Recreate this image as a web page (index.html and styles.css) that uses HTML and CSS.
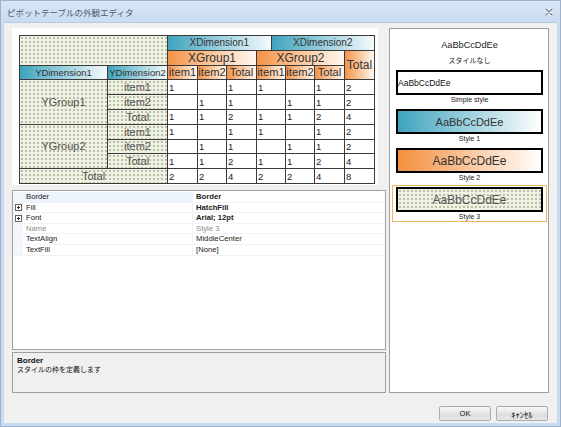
FILE: index.html
```html
<!DOCTYPE html>
<html lang="ja">
<head>
  <meta charset="UTF-8">
  <title>ピボットテーブルの外観エディタ</title>
  <link rel="stylesheet" href="styles.css">
</head>
<body>
<div class="window">
  <!-- Title bar -->
  <div class="titlebar">
    <span class="title">ピボットテーブルの外観エディタ</span>
    <svg class="close" width="8" height="8" viewBox="0 0 8 8">
      <path d="M1 1 L7 7 M7 1 L1 7" stroke="#fff" stroke-width="3" stroke-linecap="round"/>
      <path d="M1 1 L7 7 M7 1 L1 7" stroke="#6d7f96" stroke-width="1.4" stroke-linecap="round"/>
    </svg>
  </div>

  <div class="client">
    <div class="main">
      <div class="left">
        <!-- Pivot preview -->
        <div class="preview">
          <div class="pivot">
            <div class="cell hatch corner"></div>
            <div class="cell xdims">
              <div class="teal">XDimension1</div>
              <div class="teal">XDimension2</div>
            </div>

            <div class="cell orange group span3">XGroup1</div>
            <div class="cell orange group span3">XGroup2</div>
            <div class="cell orange group rows2">Total</div>

            <div class="cell teal ydim">YDimension1</div>
            <div class="cell teal ydim">YDimension2</div>
            <div class="cell orange item">item1</div>
            <div class="cell orange item">item2</div>
            <div class="cell orange item">Total</div>
            <div class="cell orange item">item1</div>
            <div class="cell orange item">item2</div>
            <div class="cell orange item">Total</div>

            <div class="cell hatch rowgroup rows3">YGroup1</div>
            <div class="cell hatch rowhead">item1</div>
            <div class="cell num">1</div><div class="cell num"></div><div class="cell num">1</div><div class="cell num">1</div><div class="cell num"></div><div class="cell num">1</div><div class="cell num">2</div>
            <div class="cell hatch rowhead">item2</div>
            <div class="cell num"></div><div class="cell num">1</div><div class="cell num">1</div><div class="cell num"></div><div class="cell num">1</div><div class="cell num">1</div><div class="cell num">2</div>
            <div class="cell hatch rowhead">Total</div>
            <div class="cell num">1</div><div class="cell num">1</div><div class="cell num">2</div><div class="cell num">1</div><div class="cell num">1</div><div class="cell num">2</div><div class="cell num">4</div>

            <div class="cell hatch rowgroup rows3">YGroup2</div>
            <div class="cell hatch rowhead">item1</div>
            <div class="cell num">1</div><div class="cell num"></div><div class="cell num">1</div><div class="cell num">1</div><div class="cell num"></div><div class="cell num">1</div><div class="cell num">2</div>
            <div class="cell hatch rowhead">item2</div>
            <div class="cell num"></div><div class="cell num">1</div><div class="cell num">1</div><div class="cell num"></div><div class="cell num">1</div><div class="cell num">1</div><div class="cell num">2</div>
            <div class="cell hatch rowhead">Total</div>
            <div class="cell num">1</div><div class="cell num">1</div><div class="cell num">2</div><div class="cell num">1</div><div class="cell num">1</div><div class="cell num">2</div><div class="cell num">4</div>

            <div class="cell hatch rowhead span2">Total</div>
            <div class="cell num">2</div><div class="cell num">2</div><div class="cell num">4</div><div class="cell num">2</div><div class="cell num">2</div><div class="cell num">4</div><div class="cell num">8</div>
          </div>
        </div>

        <!-- Property grid -->
        <div class="props">
          <div class="prop-row selected">
            <span class="gutter"></span><span class="pname">Border</span><span class="pval bold">Border</span>
          </div>
          <div class="prop-row">
            <span class="gutter"><svg width="7" height="7" viewBox="0 0 7 7"><rect x="0.5" y="0.5" width="6" height="6" fill="#fff" stroke="#666"/><path d="M2 3.5 H5 M3.5 2 V5" stroke="#333"/></svg></span>
            <span class="pname">Fill</span><span class="pval bold">HatchFill</span>
          </div>
          <div class="prop-row">
            <span class="gutter"><svg width="7" height="7" viewBox="0 0 7 7"><rect x="0.5" y="0.5" width="6" height="6" fill="#fff" stroke="#666"/><path d="M2 3.5 H5 M3.5 2 V5" stroke="#333"/></svg></span>
            <span class="pname">Font</span><span class="pval bold">Arial; 12pt</span>
          </div>
          <div class="prop-row readonly">
            <span class="gutter"></span><span class="pname">Name</span><span class="pval">Style 3</span>
          </div>
          <div class="prop-row">
            <span class="gutter"></span><span class="pname">TextAlign</span><span class="pval">MiddleCenter</span>
          </div>
          <div class="prop-row">
            <span class="gutter"></span><span class="pname">TextFill</span><span class="pval">[None]</span>
          </div>
        </div>

        <!-- Description -->
        <div class="desc">
          <div class="desc-title">Border</div>
          <div class="desc-text">スタイルの枠を定義します</div>
        </div>
      </div>

      <!-- Style list -->
      <div class="styles">
        <div class="nostyle-sample">AaBbCcDdEe</div>
        <div class="nostyle-label">スタイルなし</div>

        <div class="style-item">
          <div class="sample simple">AaBbCcDdEe</div>
          <div class="style-name">Simple style</div>
        </div>
        <div class="style-item">
          <div class="sample style1">AaBbCcDdEe</div>
          <div class="style-name">Style 1</div>
        </div>
        <div class="style-item">
          <div class="sample style2">AaBbCcDdEe</div>
          <div class="style-name">Style 2</div>
        </div>
        <div class="style-item selected">
          <div class="sample style3 hatch">AaBbCcDdEe</div>
          <div class="style-name">Style 3</div>
        </div>
      </div>
    </div>

    <div class="buttons">
      <button class="btn">OK</button>
      <button class="btn cancel">ｷｬﾝｾﾙ</button>
    </div>
  </div>
</div>
</body>
</html>
```

FILE: styles.css
```css
/* styles.css */

:root {
  --frame: #c9dbef;
  --face: #f0f0f0;
  --panel-border: #a0a0a0;
  --grid-line: #3a3a3a;
  --teal: #3fa3be;
  --orange: #f49447;
}

* {
  box-sizing: border-box;
}

body {
  margin: 0;
  font-family: "Liberation Sans", "Noto Sans CJK JP", sans-serif;
  background: #ffffff;
}

/* Window frame */
.window {
  width: 561px;
  height: 427px;
  display: flex;
  flex-direction: column;
  background: linear-gradient(#d9e6f5, var(--frame) 22px);
  border: 1px solid #9db2cc;
  padding: 0 3px 3px;
}

.titlebar {
  height: 21px;
  display: flex;
  align-items: center;
  justify-content: space-between;
  padding: 0 4px 0 3px;
}

.title {
  font-family: "Noto Sans CJK JP", sans-serif;
  font-size: 8.5px;
  color: #4a5a70;
}

.client {
  flex: 1;
  background: var(--face);
  border-top: 1px solid #b9cbe0;
  padding: 5px 8px 0;
  display: flex;
  flex-direction: column;
}

.main {
  display: flex;
  gap: 3px;
  height: 365px;
}

.left {
  width: 374px;
  display: flex;
  flex-direction: column;
}

/* Pivot preview */
.preview {
  width: 366px;
  height: 157px;
  background: #ffffff;
  padding: 7px;
}

.pivot {
  display: grid;
  grid-template-columns: 88px 60px 30px 29px 30px 29px 29px 30px 30px;
  grid-template-rows: repeat(10, 14.8px);
  width: 356px;
  border-left: 1px solid var(--grid-line);
  border-top: 1px solid var(--grid-line);
}

.cell {
  border-right: 1px solid var(--grid-line);
  border-bottom: 1px solid var(--grid-line);
  display: flex;
  align-items: center;
  justify-content: center;
  overflow: hidden;
  white-space: nowrap;
  color: #333;
}

.hatch {
  background:
    radial-gradient(circle, #a4ad95 0.6px, transparent 1px) 0 0 / 4px 4px,
    #eff2e2;
}

.teal {
  background: linear-gradient(to right, var(--teal), #f4fafc);
}

.orange {
  background: linear-gradient(to right, var(--orange), #fff8f2);
}

.corner {
  grid-column: span 2;
  grid-row: span 2;
}

.xdims {
  grid-column: span 7;
  justify-content: stretch;
}

.xdims div {
  flex: 1;
  height: 100%;
  display: flex;
  align-items: center;
  justify-content: center;
  font-size: 10px;
}

.xdims div:first-child {
  border-right: 1px solid var(--grid-line);
}

.span2 { grid-column: span 2; }
.span3 { grid-column: span 3; }
.rows2 { grid-row: span 2; }
.rows3 { grid-row: span 3; }

.group {
  font-size: 12px;
}

.item {
  font-size: 11.2px;
}

.ydim {
  font-size: 9.5px;
}

.rowgroup {
  font-size: 11px;
  color: #555;
}

.rowhead {
  font-size: 11px;
  color: #555;
}

.num {
  justify-content: flex-start;
  padding-left: 1px;
  font-size: 9.5px;
  color: #222;
}

/* Property grid */
.props {
  height: 160px;
  margin-top: 5px;
  background: #ffffff;
  border: 1px solid var(--panel-border);
  padding: 1px 1px 0 0;
  font-size: 7.7px;
  color: #222;
}

.prop-row {
  display: grid;
  grid-template-columns: 10px 170px 1fr;
  height: 10.6px;
  border-bottom: 1px solid #f0f2f6;
}

.gutter {
  background: #f3f6fa;
  display: flex;
  align-items: center;
  justify-content: center;
}

.pname {
  padding-left: 3px;
  border-right: 1px solid #f0f2f6;
  line-height: 10px;
}

.pval {
  padding-left: 3px;
  line-height: 10px;
}

.bold {
  font-weight: bold;
}

.prop-row.selected .pname {
  background: #edf3fb;
}

.prop-row.readonly {
  color: #8c8c8c;
}

/* Description */
.desc {
  height: 41px;
  margin-top: 2px;
  border: 1px solid var(--panel-border);
  padding: 3px 4px;
  background: var(--face);
  color: #111;
}

.desc-title {
  font-size: 8px;
  font-weight: bold;
  line-height: 9px;
}

.desc-text {
  font-size: 7px;
  line-height: 10px;
}

/* Style list */
.styles {
  width: 160px;
  background: #ffffff;
  border: 1px solid var(--panel-border);
  padding: 9px 1px 0 2px;
  display: flex;
  flex-direction: column;
}

.nostyle-sample {
  text-align: center;
  font-size: 9.2px;
  line-height: 15px;
  color: #222;
}

.nostyle-label {
  text-align: center;
  font-size: 7px;
  line-height: 15px;
  color: #222;
}

.style-item {
  border: 1px solid transparent;
  padding: 1px 3px 0;
  margin-bottom: 2px;
}

.style-item.selected {
  border-color: #f3b45e;
}

.sample {
  height: 25px;
  border: 2px solid #000;
  display: flex;
  align-items: center;
  justify-content: center;
  font-size: 11.5px;
  color: #333;
}

.sample.simple {
  justify-content: flex-start;
  background: #ffffff;
  font-size: 8.5px;
  color: #111;
}

.sample.style1 {
  background: linear-gradient(to right, var(--teal), #ffffff);
  font-size: 11px;
}

.sample.style2 {
  background: linear-gradient(to right, #f38f3e, #ffffff);
  font-size: 12px;
}

.sample.style3 {
  font-size: 12px;
  color: #555;
}

.style-name {
  text-align: center;
  font-size: 7px;
  line-height: 9px;
  color: #222;
}

/* Dialog buttons */
.buttons {
  display: flex;
  justify-content: flex-end;
  gap: 5px;
  margin-top: 13px;
  padding-right: 1px;
}

.btn {
  width: 52px;
  height: 15px;
  padding: 0;
  border: 1px solid #acacac;
  border-radius: 2px;
  background: linear-gradient(#f6f6f6, #e6e6e6 50%, #dcdcdc 51%, #e8e8e8);
  font-family: "Liberation Sans", "Noto Sans CJK JP", sans-serif;
  font-size: 7.5px;
  color: #111;
}

.btn.cancel {
  font-size: 8.5px;
}
```
